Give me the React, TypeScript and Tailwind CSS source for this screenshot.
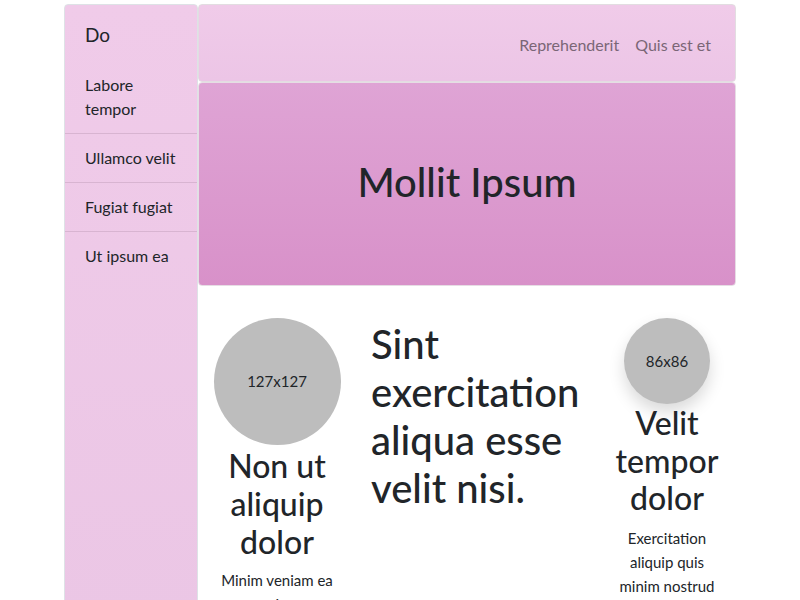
import React from "react";

export default function App() {
  const font = { fontFamily: "Lato, 'Open Sans', sans-serif" };
  return (
    <div className="min-h-[600px] bg-white text-[#212529]" style={font}>
      <div className="mx-auto flex w-[672px] pt-[4px]">
        <aside className="w-[134px] min-h-[620px] shrink-0 rounded-t-[4px] border border-[#dee2e6] bg-gradient-to-b from-[#f0cbe9] to-[#ebc6e5]">
          <div className="h-[55px] pl-[20px] pt-[17px] text-[19px] leading-[26px]">Do</div>
          <ul className="text-[16px] leading-[24px]">
            <li className="border-b border-[#d8b4d1] pl-[20px] pr-[20px] pt-[13px] pb-[12px]">Labore tempor</li>
            <li className="border-b border-[#d8b4d1] pl-[20px] pt-[12px] pb-[12px]">Ullamco velit</li>
            <li className="border-b border-[#d8b4d1] pl-[20px] pt-[12px] pb-[12px]">Fugiat fugiat</li>
            <li className="pl-[20px] pt-[12px] pb-[12px]">Ut ipsum ea</li>
          </ul>
        </aside>
        <main className="flex-1">
          <div className="flex h-[78px] items-center justify-end gap-[16px] rounded-[4px] border border-[#e2dde1] bg-gradient-to-b from-[#f0cbe9] to-[#ecc5e6] pr-[24px] pt-[4px] text-[16px] text-[#7a6676]">
            <span>Reprehenderit</span>
            <span>Quis est et</span>
          </div>
          <div className="flex h-[204px] items-center justify-center rounded-[4px] border border-[#e6dde4] bg-gradient-to-b from-[#dfa4d5] to-[#d891c9] pb-[4px]">
            <h1 className="text-[40px] font-medium leading-[48px]">Mollit Ipsum</h1>
          </div>
          <div className="flex pt-[32px]">
            <div className="flex w-[158px] flex-col items-center px-[12px] text-center">
              <div className="flex h-[127px] w-[127px] items-center justify-center rounded-full bg-[#bdbdbd] text-[15px]">127x127</div>
              <h2 className="mt-[2px] text-[32px] font-medium leading-[38px]">Non ut aliquip dolor</h2>
              <p className="mt-[7px] text-[15px] leading-[24px]">Minim veniam ea enim.</p>
            </div>
            <div className="w-[242px] px-[12px] pt-[2px]">
              <h2 className="pl-[3px] text-[40px] font-medium leading-[48px]">Sint exercitation aliqua esse velit nisi.</h2>
            </div>
            <div className="flex w-[138px] flex-col items-center px-[12px] text-center">
              <div className="flex h-[86px] w-[86px] items-center justify-center rounded-full bg-[#bdbdbd] text-[15px] shadow-[0_8px_16px_rgba(0,0,0,0.15)]">86x86</div>
              <h2 className="text-[32px] font-medium leading-[37.5px]">Velit tempor dolor</h2>
              <p className="mt-[9px] text-[15px] leading-[24px]">Exercitation aliquip quis minim nostrud</p>
            </div>
          </div>
        </main>
      </div>
    </div>
  );
}
